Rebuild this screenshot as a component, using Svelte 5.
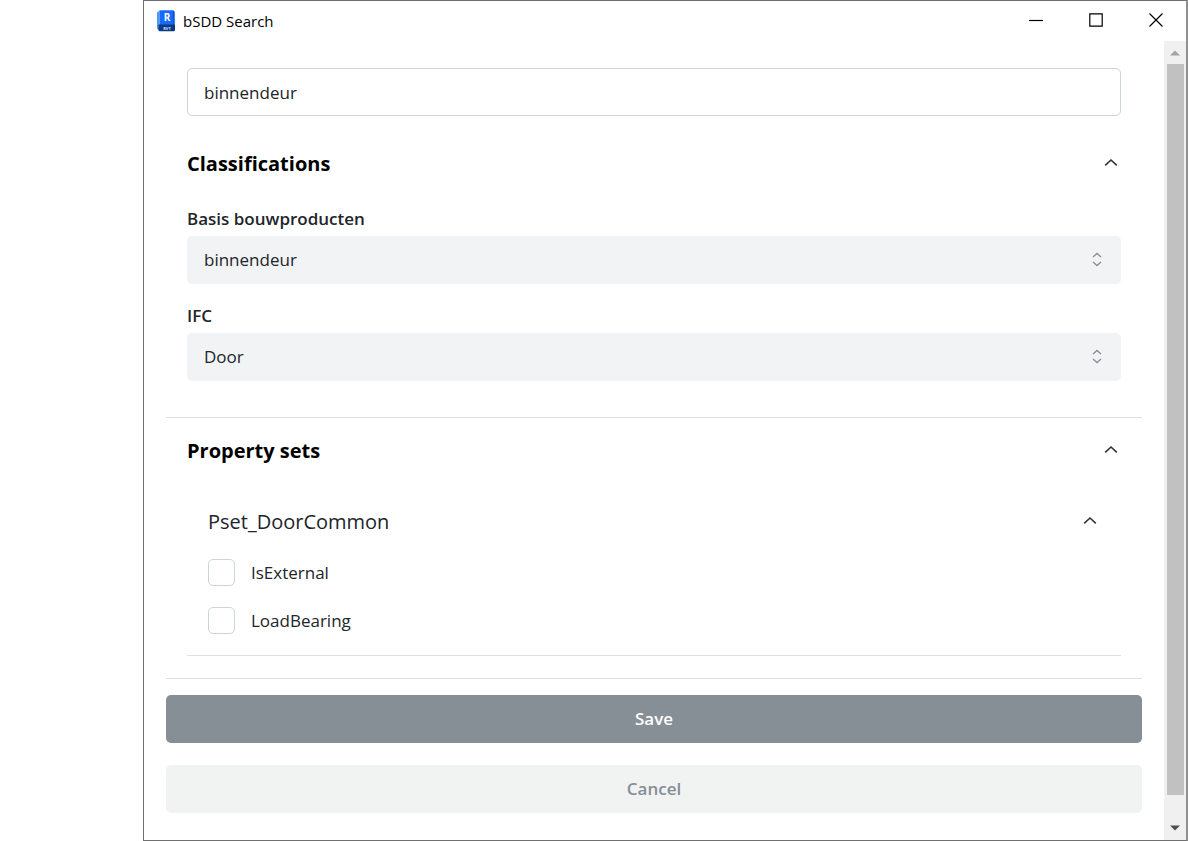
<script>
  let query = $state('binnendeur');
  let classificationsOpen = $state(true);
  let propertySetsOpen = $state(true);
  let doorCommonOpen = $state(true);

  const classifications = [
    { id: 'basis', label: 'Basis bouwproducten', value: 'binnendeur' },
    { id: 'ifc', label: 'IFC', value: 'Door' }
  ];

  let properties = $state([
    { name: 'IsExternal', checked: false },
    { name: 'LoadBearing', checked: false }
  ]);
</script>

{#snippet chevron(open)}
  <svg class="chevron" class:closed={!open} viewBox="0 0 14 14" width="14" height="14" aria-hidden="true">
    <path d="M1.2 8.4 7 3l5.800 5.400" fill="none" stroke="#333" stroke-width="1.6" />
  </svg>
{/snippet}

<div class="window">
  <header class="titlebar">
    <svg class="logo" viewBox="0 0 20 22" width="20" height="22" aria-hidden="true">
      <path d="M1 2.500 3.500.5v20.500L1 18.500z" fill="#4c9be8" />
      <path d="M3.500.2H17l1.500 1.500V15h-15z" fill="#1769ff" />
      <path d="M17 .2 18.500 1.700V15H17z" fill="#0b56c4" />
      <path d="M2.500 14.500h16.500v6L18 21.300H3.500l-1-1z" fill="#0a3a86" />
      <text x="11" y="11" text-anchor="middle" font-size="10" font-weight="700" fill="#fff">R</text>
      <text x="11" y="19.500" text-anchor="middle" font-size="4" font-weight="700" fill="#cfe0fa">RVT</text>
    </svg>
    <h1>bSDD Search</h1>
    <div class="controls">
      <button type="button" aria-label="Minimize">
        <svg viewBox="0 0 14 14" width="14" height="14"><path d="M0 7.500h14" stroke="#000" stroke-width="1.200" /></svg>
      </button>
      <button type="button" aria-label="Maximize">
        <svg viewBox="0 0 14 14" width="14" height="14"><path d="M.8.8h12.400v12.400H.8z" fill="none" stroke="#000" stroke-width="1.200" /></svg>
      </button>
      <button type="button" aria-label="Close">
        <svg viewBox="0 0 14 14" width="14" height="14"><path d="m.5.5 13 13m0-13-13 13" stroke="#000" stroke-width="1.200" /></svg>
      </button>
    </div>
  </header>

  <div class="body">
    <main>
      <div class="search">
        <input type="text" aria-label="Search" bind:value={query} />
      </div>

      <section class="group">
        <h2>
          <button type="button" class="toggle" aria-expanded={classificationsOpen} onclick={() => (classificationsOpen = !classificationsOpen)}>
            Classifications
            {@render chevron(classificationsOpen)}
          </button>
        </h2>
        {#if classificationsOpen}
          <div class="fields">
            {#each classifications as item (item.id)}
              <div class="field">
                <label for={item.id}>{item.label}</label>
                <div class="select">
                  <select id={item.id}>
                    <option>{item.value}</option>
                  </select>
                  <svg viewBox="0 0 12 16" width="12" height="16" aria-hidden="true">
                    <path d="m2 5 4-3.600L10 5M2 10l4 3.600L10 10" fill="none" stroke="#868e96" stroke-width="1.300" />
                  </svg>
                </div>
              </div>
            {/each}
          </div>
        {/if}
      </section>

      <section class="group">
        <h2>
          <button type="button" class="toggle" aria-expanded={propertySetsOpen} onclick={() => (propertySetsOpen = !propertySetsOpen)}>
            Property sets
            {@render chevron(propertySetsOpen)}
          </button>
        </h2>
        {#if propertySetsOpen}
          <div class="sets">
            <section class="set">
              <h3>
                <button type="button" class="toggle" aria-expanded={doorCommonOpen} onclick={() => (doorCommonOpen = !doorCommonOpen)}>
                  Pset_DoorCommon
                  {@render chevron(doorCommonOpen)}
                </button>
              </h3>
              {#if doorCommonOpen}
                <div class="checks">
                  {#each properties as property (property.name)}
                    <label>
                      <input type="checkbox" bind:checked={property.checked} />
                      {property.name}
                    </label>
                  {/each}
                </div>
              {/if}
            </section>
          </div>
        {/if}
      </section>

      <div class="actions">
        <button type="button" class="save">Save</button>
        <button type="button" class="cancel">Cancel</button>
      </div>
    </main>

    <div class="scrollbar" aria-hidden="true">
      <svg viewBox="0 0 10 6" width="10" height="6"><path d="M0 5.500 5 .5l5 5z" fill="#a3a3a3" /></svg>
      <div class="thumb"></div>
      <svg viewBox="0 0 10 6" width="10" height="6"><path d="M0 .5h10l-5 5z" fill="#505050" /></svg>
    </div>
  </div>
</div>

<style>
  :global(body) {
    background: #fff;
  }

  .window,
  .window * {
    box-sizing: border-box;
  }

  .window {
    display: flex;
    flex-direction: column;
    min-height: 100vh;
    margin-left: 143px;
    border: 1px solid #707070;
    border-right: 2px solid #909090;
    background: #fff;
    color: #212529;
    font-family: 'Segoe UI', 'Open Sans', 'Noto Sans', sans-serif;
    font-size: 17px;
    line-height: 28px;
  }

  button,
  input,
  select {
    font: inherit;
    color: inherit;
  }

  h1,
  h2,
  h3 {
    margin: 0;
    font: inherit;
  }

  button {
    padding: 0;
    border: 0;
    background: none;
  }

  .titlebar {
    display: flex;
    align-items: center;
    height: 40px;
    padding-left: 12px;
  }

  .titlebar h1 {
    flex: 1;
    margin-left: 7px;
    color: #000;
    font-size: 15px;
  }

  .controls {
    display: flex;
    align-self: flex-start;
  }

  .controls button {
    display: grid;
    place-items: center;
    width: 60px;
    height: 38px;
  }

  .body {
    display: flex;
    flex: 1;
  }

  main {
    flex: 1;
    min-width: 0;
    padding: 27px 22px;
  }

  .search {
    padding: 0 21px 15px;
  }

  .search input {
    display: block;
    width: 100%;
    height: 48px;
    padding: 0 16px;
    border: 1px solid #ced4da;
    border-radius: 5px;
    background: #fff;
  }

  .group {
    border-bottom: 1px solid #dee2e6;
  }

  .toggle {
    display: flex;
    align-items: center;
    justify-content: space-between;
    width: 100%;
    text-align: left;
  }

  .chevron {
    margin: 0 3px;
  }

  .chevron.closed {
    transform: rotate(180deg);
  }

  h2 .toggle {
    height: 66px;
    padding: 0 21px;
    color: #000;
    font-size: 20px;
    font-weight: 700;
  }

  .fields {
    display: grid;
    gap: 18px;
    padding: 8px 21px 36px;
  }

  .field {
    display: grid;
    gap: 3px;
  }

  .field label {
    font-weight: 600;
  }

  .select {
    display: grid;
    align-items: center;
  }

  .select > * {
    grid-area: 1 / 1;
  }

  .select svg {
    justify-self: end;
    margin-right: 18px;
    pointer-events: none;
  }

  select {
    appearance: none;
    width: 100%;
    height: 48px;
    padding: 0 17px;
    border: 0;
    border-radius: 5px;
    background: #f1f3f5;
  }

  .sets {
    padding: 14px 21px 22px;
  }

  .set {
    border-bottom: 1px solid #dee2e6;
  }

  h3 .toggle {
    height: 48px;
    padding: 0 21px;
    font-size: 20px;
  }

  .checks {
    display: grid;
    gap: 21px;
    padding: 13px 21px 21px;
  }

  .checks label {
    display: flex;
    align-items: center;
    gap: 16px;
    height: 27px;
  }

  .checks input {
    appearance: none;
    width: 27px;
    height: 27px;
    margin: 0;
    border: 1px solid #ced4da;
    border-radius: 5px;
    background: #fff;
  }

  .checks input:checked {
    background: #868e96;
  }

  .actions {
    display: grid;
    gap: 22px;
    padding-top: 16px;
  }

  .actions button {
    height: 48px;
    border-radius: 5px;
    font-weight: 600;
  }

  .actions .save {
    background: #868e96;
    color: #fff;
  }

  .actions .cancel {
    background: #f1f3f3;
    color: #868e96;
  }

  .scrollbar {
    display: flex;
    flex-direction: column;
    align-items: center;
    gap: 8px;
    width: 22px;
    padding: 9px 0;
    background: #f0f0f0;
  }

  .thumb {
    flex: 1;
    width: 17px;
    margin-bottom: 22px;
    background: #c1c1c1;
  }
</style>
